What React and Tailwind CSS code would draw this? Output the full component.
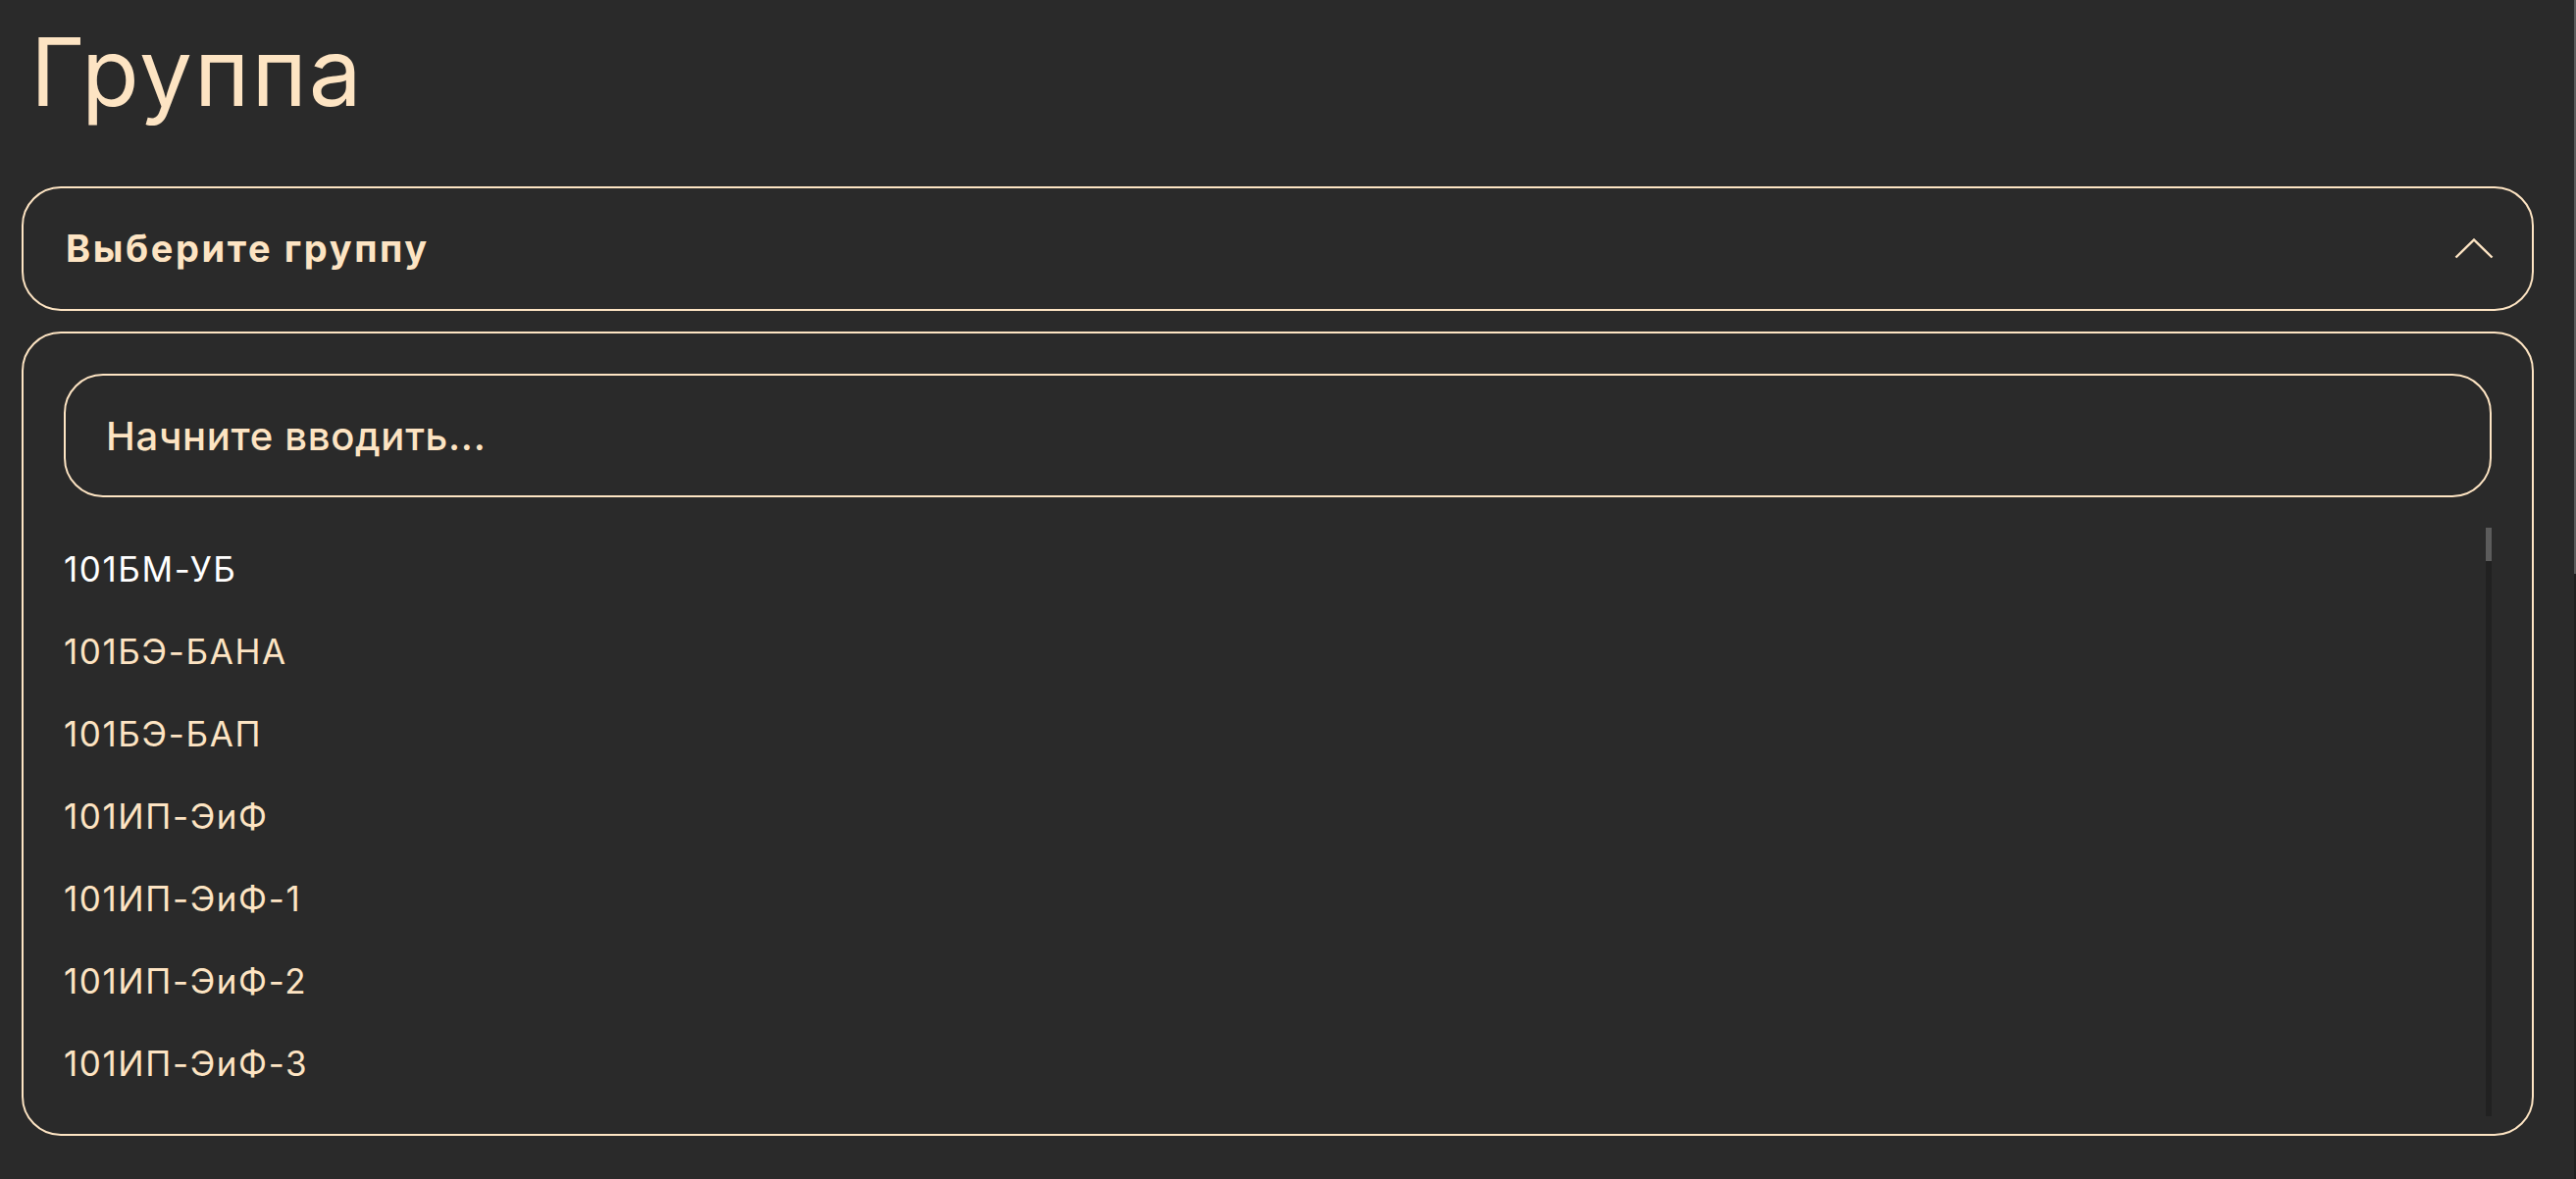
import React, { useState } from 'react';

const CODES = ['БМ-УБ', 'БЭ-БАНА', 'БЭ-БАП', 'ИП-ЭиФ', 'ИП-ЭиФ-1', 'ИП-ЭиФ-2', 'ИП-ЭиФ-3'];

const GROUPS = [];
for (let n = 101; n <= 118; n++) {
  CODES.forEach((c) => GROUPS.push(`${n}${c}`));
}

// rows that fit in the 600px list window
const VISIBLE = 7;

const Chevron = () => (
  <svg width="40" height="21" viewBox="0 0 40 21" fill="none">
    <polyline points="1.5,19.5 20,1.5 38.5,19.5" stroke="#fde4c3" strokeWidth="2.4" />
  </svg>
);

const App = () => {
  const [query, setQuery] = useState('');

  const filtered = GROUPS.filter((g) => g.toLowerCase().includes(query.toLowerCase()));
  const rows = filtered.slice(0, VISIBLE);
  const thumb = Math.max(34, Math.round((600 * 600) / Math.max(filtered.length * 84, 600)));

  return (
    <div className="min-h-screen bg-[#2a2a2a] text-[#fde4c3] font-['Inter','Noto_Sans',sans-serif]">
      <div className="pl-[22px] pr-[43px] pt-[25px]">
        <h1 className="text-[96px] leading-none font-normal pl-[9px] tracking-[2px]">Группа</h1>

        <button
          type="button"
          className="mt-[69px] w-full h-[127px] flex items-center justify-between border-2 border-[#fde4c3] rounded-[40px] pl-[43px] pr-[39px]"
        >
          <span className="text-[38px] font-bold tracking-[2.6px]">Выберите группу</span>
          <Chevron />
        </button>

        <div className="mt-[21px] h-[820px] border-2 border-[#fde4c3] rounded-[40px] pt-[41px] px-[41px] pb-[18px] flex flex-col">
          <input
            value={query}
            onChange={(e) => setQuery(e.target.value)}
            placeholder="Начните вводить..."
            className="w-full h-[126px] shrink-0 bg-transparent border-2 border-[#fde4c3] rounded-[40px] px-[41px] text-[40px] font-medium tracking-[0.7px] outline-none placeholder:text-[#fde4c3]"
          />

          <div className="mt-[31px] h-[600px] flex">
            <ul className="flex-1">
              {rows.map((g, i) => (
                <li
                  key={g}
                  className={`h-[84px] leading-[84px] text-[35px] tracking-[1.6px] ${i === 0 ? 'text-white' : 'text-[#fde4c3]'}`}
                >
                  {g}
                </li>
              ))}
            </ul>
            <div className="w-[6px] bg-[#212121]">
              <div className="bg-[#5c5c5c]" style={{ height: thumb }} />
            </div>
          </div>
        </div>
      </div>

      {/* page scrollbar peeking at the edge */}
      <div className="fixed right-0 top-0 w-[2px] h-full bg-[#202020] pointer-events-none">
        <div className="h-[585px] bg-[#5b5b5b]" />
      </div>
    </div>
  );
};

export default App;
